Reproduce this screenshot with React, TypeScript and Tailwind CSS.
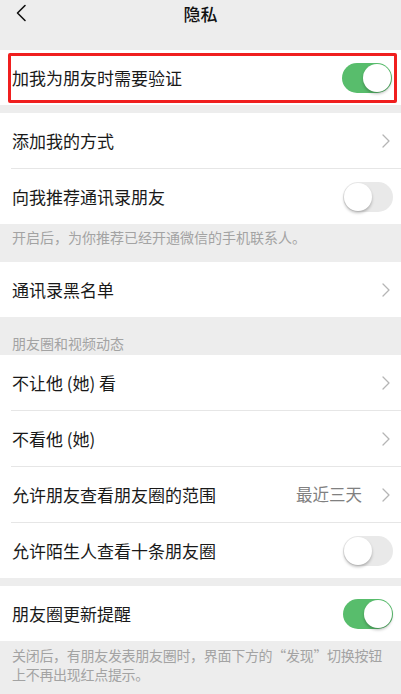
import React from 'react';

const font = { fontFamily: '"Noto Sans CJK SC", "Noto Sans", sans-serif' };

function Toggle({ on }: { on: boolean }) {
  return (
    <div
      className={`relative w-[50px] h-[30px] rounded-full ${on ? 'bg-[#58bd6c]' : 'bg-[#e9e9e9]'}`}
    >
      <div
        className={`absolute top-[1px] w-[28px] h-[28px] rounded-full bg-white shadow-[0_2px_3px_rgba(0,0,0,0.25)] ${on ? 'right-[1px]' : 'left-[1px]'}`}
      />
    </div>
  );
}

function Chevron() {
  return (
    <svg width="8" height="14" viewBox="0 0 8 14" fill="none">
      <path d="M1 1l6 6-6 6" stroke="#b5b5b5" strokeWidth="1.3" strokeLinecap="round" strokeLinejoin="round" />
    </svg>
  );
}

type Row = { label: string; toggle?: boolean; value?: string };

function Rows({ rows }: { rows: Row[] }) {
  return (
    <div className="bg-white">
      {rows.map((r, i) => (
        <div key={r.label} className={i > 0 ? 'ml-[11px] border-t border-[#e6e6e6]' : ''}>
          <div className={`h-[55px] flex items-center justify-between ${i > 0 ? 'pl-[1px]' : 'pl-[12px]'} ${r.toggle === undefined ? 'pr-[11px]' : 'pr-[8px]'}`}>
            <span className="text-[17px] leading-[24px] text-[#191919]">{r.label}</span>
            {r.toggle !== undefined ? (
              <Toggle on={r.toggle} />
            ) : (
              <div className="flex items-center gap-[20px]">
                {r.value && <span className="text-[16.5px] text-[#808080]">{r.value}</span>}
                <Chevron />
              </div>
            )}
          </div>
        </div>
      ))}
    </div>
  );
}

function Note({ children, className = '' }: { children: React.ReactNode; className?: string }) {
  return (
    <div className={`px-[12px] text-[14px] leading-[17px] text-[#a3a3a3] ${className}`}>{children}</div>
  );
}

export default function App() {
  return (
    <div className="w-[401px] h-[694px] overflow-hidden bg-[#ededed]" style={font}>
      {/* nav */}
      <div className="relative h-[50px] flex justify-center">
        <svg className="absolute left-[15px] top-[4px]" width="12" height="18" viewBox="0 0 12 18" fill="none">
          <path d="M10 1.5L2.5 9l7.5 7.5" stroke="#111" strokeWidth="1.6" strokeLinecap="round" strokeLinejoin="round" />
        </svg>
        <span className="mt-[2px] text-[17px] leading-[24px] font-medium text-[#111]">隐私</span>
      </div>

      {/* highlighted row */}
      <div className="bg-white h-[55px] pl-[8px] pr-[4px] pt-[3px] pb-[2px]">
        <div className="h-full border-[3px] border-[#f01f1f] rounded-[2px] flex items-center justify-between pl-[1px] pr-[2px]">
          <span className="text-[17px] leading-[24px] text-[#191919]">加我为朋友时需要验证</span>
          <Toggle on={true} />
        </div>
      </div>

      <div className="h-[8px]" />
      <Rows rows={[{ label: '添加我的方式' }, { label: '向我推荐通讯录朋友', toggle: false }]} />
      <Note className="pt-[5px] h-[38px]">开启后，为你推荐已经开通微信的手机联系人。</Note>

      <Rows rows={[{ label: '通讯录黑名单' }]} />
      <Note className="pt-[18px] h-[38px]">朋友圈和视频动态</Note>

      <Rows
        rows={[
          { label: '不让他 (她) 看' },
          { label: '不看他 (她)' },
          { label: '允许朋友查看朋友圈的范围', value: '最近三天' },
          { label: '允许陌生人查看十条朋友圈', toggle: false },
        ]}
      />

      <div className="h-[8px]" />
      <Rows rows={[{ label: '朋友圈更新提醒', toggle: true }]} />
      <Note className="pt-[4px] pr-0 whitespace-nowrap tracking-[-0.3px] flex flex-col">
        <span className="leading-[20px]">关闭后，有朋友发表朋友圈时，界面下方的“发现”切换按钮</span>
        <span className="leading-[20px] -mt-[1px]">上不再出现红点提示。</span>
      </Note>
    </div>
  );
}
